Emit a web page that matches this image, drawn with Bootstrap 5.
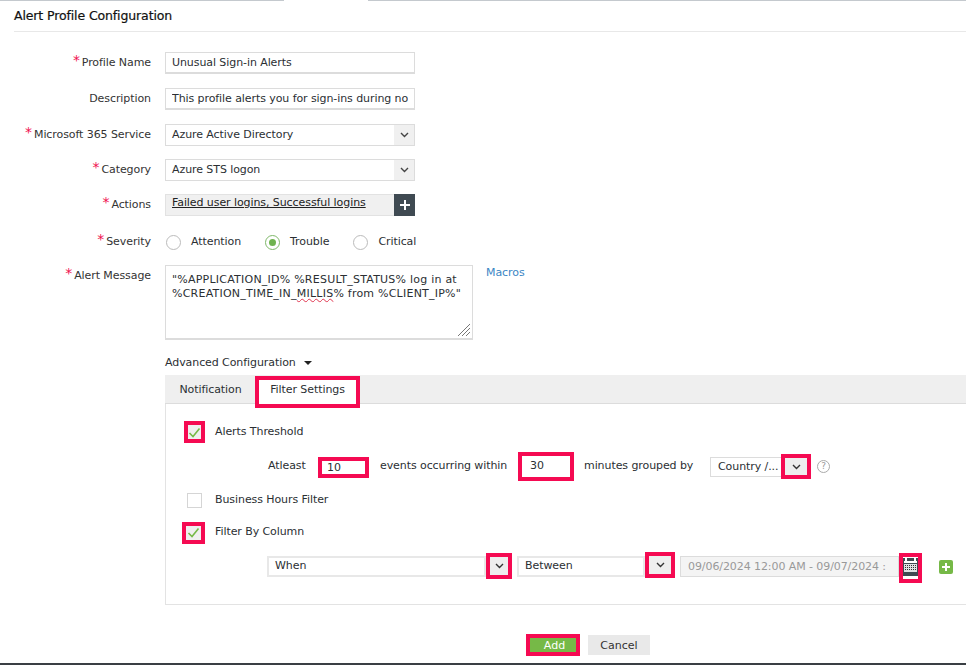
<!DOCTYPE html>
<html lang="en"><head><meta charset="utf-8"><title>Alert Profile Configuration</title>
<link rel="stylesheet" href="https://cdn.jsdelivr.net/npm/bootstrap@5.3.0/dist/css/bootstrap.min.css">
<style>
html,body{height:665px;overflow:hidden}
body{font-family:"DejaVu Sans",Verdana,sans-serif;font-size:11px;letter-spacing:-.08px;color:#2b2f33;background:#fff;border-bottom:2px solid #3a3f44}
.topstrip{height:1px;background:linear-gradient(to right,#c4c9ce 284px,#fff 284px,#fff 368px,#c4c9ce 368px)}
.pagehead{margin-left:14px;height:31px;border-bottom:1px solid #e8e8e8;font-size:12.5px;color:#111;padding-top:6px;font-weight:500;letter-spacing:-.12px;-webkit-text-stroke:.2px #111}
.frow{display:flex;align-items:center}
.flabel{width:151px;flex:none;text-align:right;margin:0;color:#333}
.flabel i{font-style:normal;color:#f0104f;font-size:14px;line-height:8px;margin-right:2px;vertical-align:1px}
.fbody{margin-left:14px;flex:none}
.tinput.form-control{font-size:11px;letter-spacing:-.08px;color:#2b2f33;border:1px solid #dcdcdc;border-bottom-width:2px;border-radius:0;padding:0 6px;height:22px;width:250px;box-shadow:none}
.pick{display:flex;height:22px;width:250px;border:1px solid #dcdcdc;border-radius:0}
.pick>span:first-child{flex:1;padding:0 6px;line-height:20px;white-space:nowrap;overflow:hidden}
.pick .arrow{width:20px;flex:none;background:#f0f0f0;display:flex;align-items:center;justify-content:center}
.actionsbox{display:flex;height:22px;width:250px;background:#f0f0f0;border:1px solid #e2e2e2;border-right:0}
.actionsbox a{color:#222;flex:1;padding:0 6px;line-height:15px}
.actionsbox b{width:21px;background:#3f4a52;display:flex;align-items:center;justify-content:center;margin:-1px 0}
.radiogroup{gap:24px;padding-left:1px}
.radioitem{display:flex;align-items:center;gap:10px}
.ring{width:15px;height:15px;border:1px solid #bbb;border-radius:50%;display:flex;align-items:center;justify-content:center;background:#fff}
.ring.sel{border-color:#7fb86a}.ring.sel::after{content:"";width:7px;height:7px;border-radius:50%;background:#6fb34f}
.msgbox{position:relative;width:308px;height:75px;border:1px solid #dcdcdc;border-bottom-width:2px;padding:7px 6px;line-height:13.5px;color:#2b2f33;letter-spacing:.23px;white-space:nowrap}
.msgbox svg{position:absolute;right:1px;bottom:1px}
.squig{text-decoration:underline wavy #e0364f 1px}
.macros{color:#3b86c4;margin-left:13px;text-decoration:none;align-self:flex-start}
.advlink{margin:15px 0 0 165px;height:15px;line-height:15px}
.advlink::after{content:"";display:inline-block;margin-left:8px;border:4px solid transparent;border-top-color:#222;border-bottom:0;vertical-align:1px}
.panelwrap{margin:5px 0 0 165px;width:801px}
.tabbar.nav{height:29px;background:#efefef;border-bottom:1px solid #dcdcdc;flex-wrap:nowrap;padding-left:0}
.tabbar .nav-link{color:#2b2f33;padding:0 0 0 1px;font-size:11px;height:29px;line-height:30px;border:0;border-radius:0}
.tabone{width:90px;text-align:center}
.tabbar .nav-link.active{background:#fff;width:105px;height:32px;margin-top:1px;padding:0;text-align:center;line-height:28px;outline:4px solid #f50a52;outline-offset:-4px;color:#2b2f33}
.tabpanel{border:1px solid #e3e3e3;border-top:0;border-right:0;height:201px;padding-top:17px}
.prow{display:flex;align-items:center}
.chk{width:15px;height:15px;border:1px solid #d5d5d5;background:#fff;display:flex;align-items:center;justify-content:center;flex:none}
.chkhl{width:21px;height:22px;border:4px solid #f50a52;background:#efefef;display:flex;align-items:center;justify-content:center;flex:none}
.inbox{height:22px;display:flex;align-items:center;padding-left:8px;border:4px solid #f50a52;background:#fff}
.greyfield{border:2px solid #e8e8e8;height:21px;display:flex;align-items:center;padding-left:6px;flex:none}
.redarrow{border:4px solid #f50a52;background:#eee;display:flex;align-items:center;justify-content:center;flex:none}
.help{width:13px;height:13px;border:1px solid #aaa;border-radius:50%;color:#999;font-size:9px;line-height:11px;text-align:center;margin-left:6px}
.datefield{width:219px;height:21px;background:#f4f4f4;border:1px solid #dcdcdc;color:#999;padding:0 7px;line-height:19px;white-space:nowrap}
.cal{width:23px;height:30px;border:4px solid #f50a52;background:#fff;display:flex;align-items:flex-start;justify-content:center;flex:none}
.greenplus{width:14px;height:14px;background:#76b947;border-radius:2px;display:flex;align-items:center;justify-content:center;margin-left:17px;margin-top:8px}
.footbar{margin-left:526px;margin-top:29px;display:flex;align-items:center;gap:8px}
.btn.addbtn{width:54px;height:22px;padding:1px 0 0 3px;border:4px solid #f50a52;border-radius:0;background:#76b947;color:#fff;font-size:11px;line-height:14px}
.btn.cancelbtn{width:62px;height:20px;padding:1px 0 0;border:0;border-radius:0;background:#e9e9e9;color:#333;font-size:11px;line-height:19px}
</style></head><body>
<div class="topstrip"></div>
<div class="pagehead">Alert Profile Configuration</div>

<div class="frow" style="margin-top:20px"><label class="flabel"><i>*</i>Profile Name</label><div class="fbody"><input class="form-control tinput" value="Unusual Sign-in Alerts"></div></div>
<div class="frow" style="margin-top:14px"><label class="flabel">Description</label><div class="fbody"><input class="form-control tinput" value="This profile alerts you for sign-ins during non-business hours"></div></div>
<div class="frow" style="margin-top:14px"><label class="flabel"><i>*</i>Microsoft 365 Service</label><div class="fbody"><div class="pick"><span>Azure Active Directory</span><span class="arrow"><svg width="9" height="6" viewBox="0 0 9 6"><path d="M1 1l3.500 3.500L8 1" fill="none" stroke="#444" stroke-width="1.400"/></svg></span></div></div></div>
<div class="frow" style="margin-top:13px"><label class="flabel"><i>*</i>Category</label><div class="fbody"><div class="pick"><span>Azure STS logon</span><span class="arrow"><svg width="9" height="6" viewBox="0 0 9 6"><path d="M1 1l3.500 3.500L8 1" fill="none" stroke="#444" stroke-width="1.400"/></svg></span></div></div></div>
<div class="frow" style="margin-top:13px"><label class="flabel"><i>*</i>Actions</label><div class="fbody"><div class="actionsbox"><a href="#">Failed user logins, Successful logins</a><b><svg width="12" height="12" viewBox="0 0 12 12"><path d="M6 1v10M1 6h10" stroke="#fff" stroke-width="2"/></svg></b></div></div></div>
<div class="frow" style="margin-top:18px;height:16px"><label class="flabel"><i>*</i>Severity</label><div class="fbody d-flex radiogroup"><span class="radioitem"><span class="ring"></span>Attention</span><span class="radioitem"><span class="ring sel"></span>Trouble</span><span class="radioitem"><span class="ring"></span>Critical</span></div></div>

<div class="frow align-items-start" style="margin-top:15px"><label class="flabel" style="margin-top:3px"><i>*</i>Alert Message</label><div class="fbody"><div class="msgbox">"%APPLICATION_ID% %RESULT_STATUS% log in at<br>%CREATION_TIME_IN_<span class="squig">MILLIS</span>% from %CLIENT_IP%"<svg width="15" height="15" viewBox="0 0 15 15"><path d="M14 2L2 14M14 6L6 14M14 10L10 14" stroke="#777" fill="none"/></svg></div></div><a class="macros" href="#">Macros</a></div>

<div class="advlink">Advanced Configuration</div>
<div class="panelwrap">
<ul class="nav tabbar"><li class="nav-item tabone"><a class="nav-link" href="#">Notification</a></li><li class="nav-item"><a class="nav-link active" href="#">Filter Settings</a></li></ul>
<div class="tabpanel">
 <div class="prow" style="padding-left:18px;gap:10px"><span class="chkhl"><svg width="13" height="11" viewBox="0 0 13 11"><path d="M1.500 6l3.500 3.500L11.500 1.500" fill="none" stroke="#76b947" stroke-width="1.600"/></svg></span><span>Alerts Threshold</span></div>
 <div class="prow" style="margin-top:9px;padding-left:102px;height:29px">
  <span style="width:50px">Atleast</span>
  <span class="inbox" style="width:51px;height:21px;padding-left:5px;margin-top:2px;line-height:13px">10</span>
  <span style="margin-left:11px;width:138px">events occurring within</span>
  <span class="inbox" style="width:56px;height:29px">30</span>
  <span style="margin-left:10px;width:126px">minutes grouped by</span>
  <span class="greyfield" style="width:72px;height:20px;border-width:1px;border-color:#dcdcdc;padding:2px 0 0 7px">Country /...</span>
  <span class="redarrow" style="width:30px;height:25px;margin-left:-1px"><svg width="9" height="6" viewBox="0 0 9 6"><path d="M1 1l3.500 3.500L8 1" fill="none" stroke="#333" stroke-width="1.400"/></svg></span>
  <span class="help">?</span>
 </div>
 <div class="prow" style="margin-top:11px;padding-left:21px;gap:13px"><span class="chk"></span><span>Business Hours Filter</span></div>
 <div class="prow" style="margin-top:13px;padding-left:16px;gap:10px"><span class="chkhl" style="width:23px"><svg width="13" height="11" viewBox="0 0 13 11"><path d="M1.500 6l3.500 3.500L11.500 1.500" fill="none" stroke="#76b947" stroke-width="1.600"/></svg></span><span>Filter By Column</span></div>
 <div class="prow" style="margin-top:8px;padding-left:101px;height:30px;align-items:flex-start">
  <span class="greyfield" style="width:219px;margin-top:4px">When</span>
  <span class="redarrow" style="width:26px;height:26px;margin-top:1px"><svg width="9" height="6" viewBox="0 0 9 6"><path d="M1 1l3.500 3.500L8 1" fill="none" stroke="#333" stroke-width="1.400"/></svg></span>
  <span class="greyfield" style="width:128px;margin:4px 0 0 5px">Between</span>
  <span class="redarrow" style="width:30px;height:26px"><svg width="9" height="6" viewBox="0 0 9 6"><path d="M1 1l3.500 3.500L8 1" fill="none" stroke="#333" stroke-width="1.400"/></svg></span>
  <span class="datefield" style="margin:4px 0 0 5px">09/06/2024 12:00 AM - 09/07/2024 :</span>
  <span class="cal" style="margin-top:1px"><svg width="15" height="21" viewBox="0 0 15 21"><rect x="0" y="1" width="15" height="18" fill="#3f4a52"/><rect x="2" y="0" width="2" height="4" fill="#fff"/><rect x="11" y="0" width="2" height="4" fill="#fff"/><rect x="1" y="4" width="13" height="2" fill="#fff"/><rect x="1" y="7" width="13" height="8" fill="#dfe2e4"/><path d="M2 8.500h11M2 10.500h11M2 12.500h11" stroke="#333" stroke-dasharray="1 1"/></svg></span>
  <span class="greenplus"><svg width="10" height="10" viewBox="0 0 10 10"><path d="M5 1v8M1 5h8" stroke="#fff" stroke-width="2"/></svg></span>
 </div>
</div></div>
<div class="footbar"><button class="btn addbtn">Add</button><button class="btn cancelbtn">Cancel</button></div>
</body></html>
